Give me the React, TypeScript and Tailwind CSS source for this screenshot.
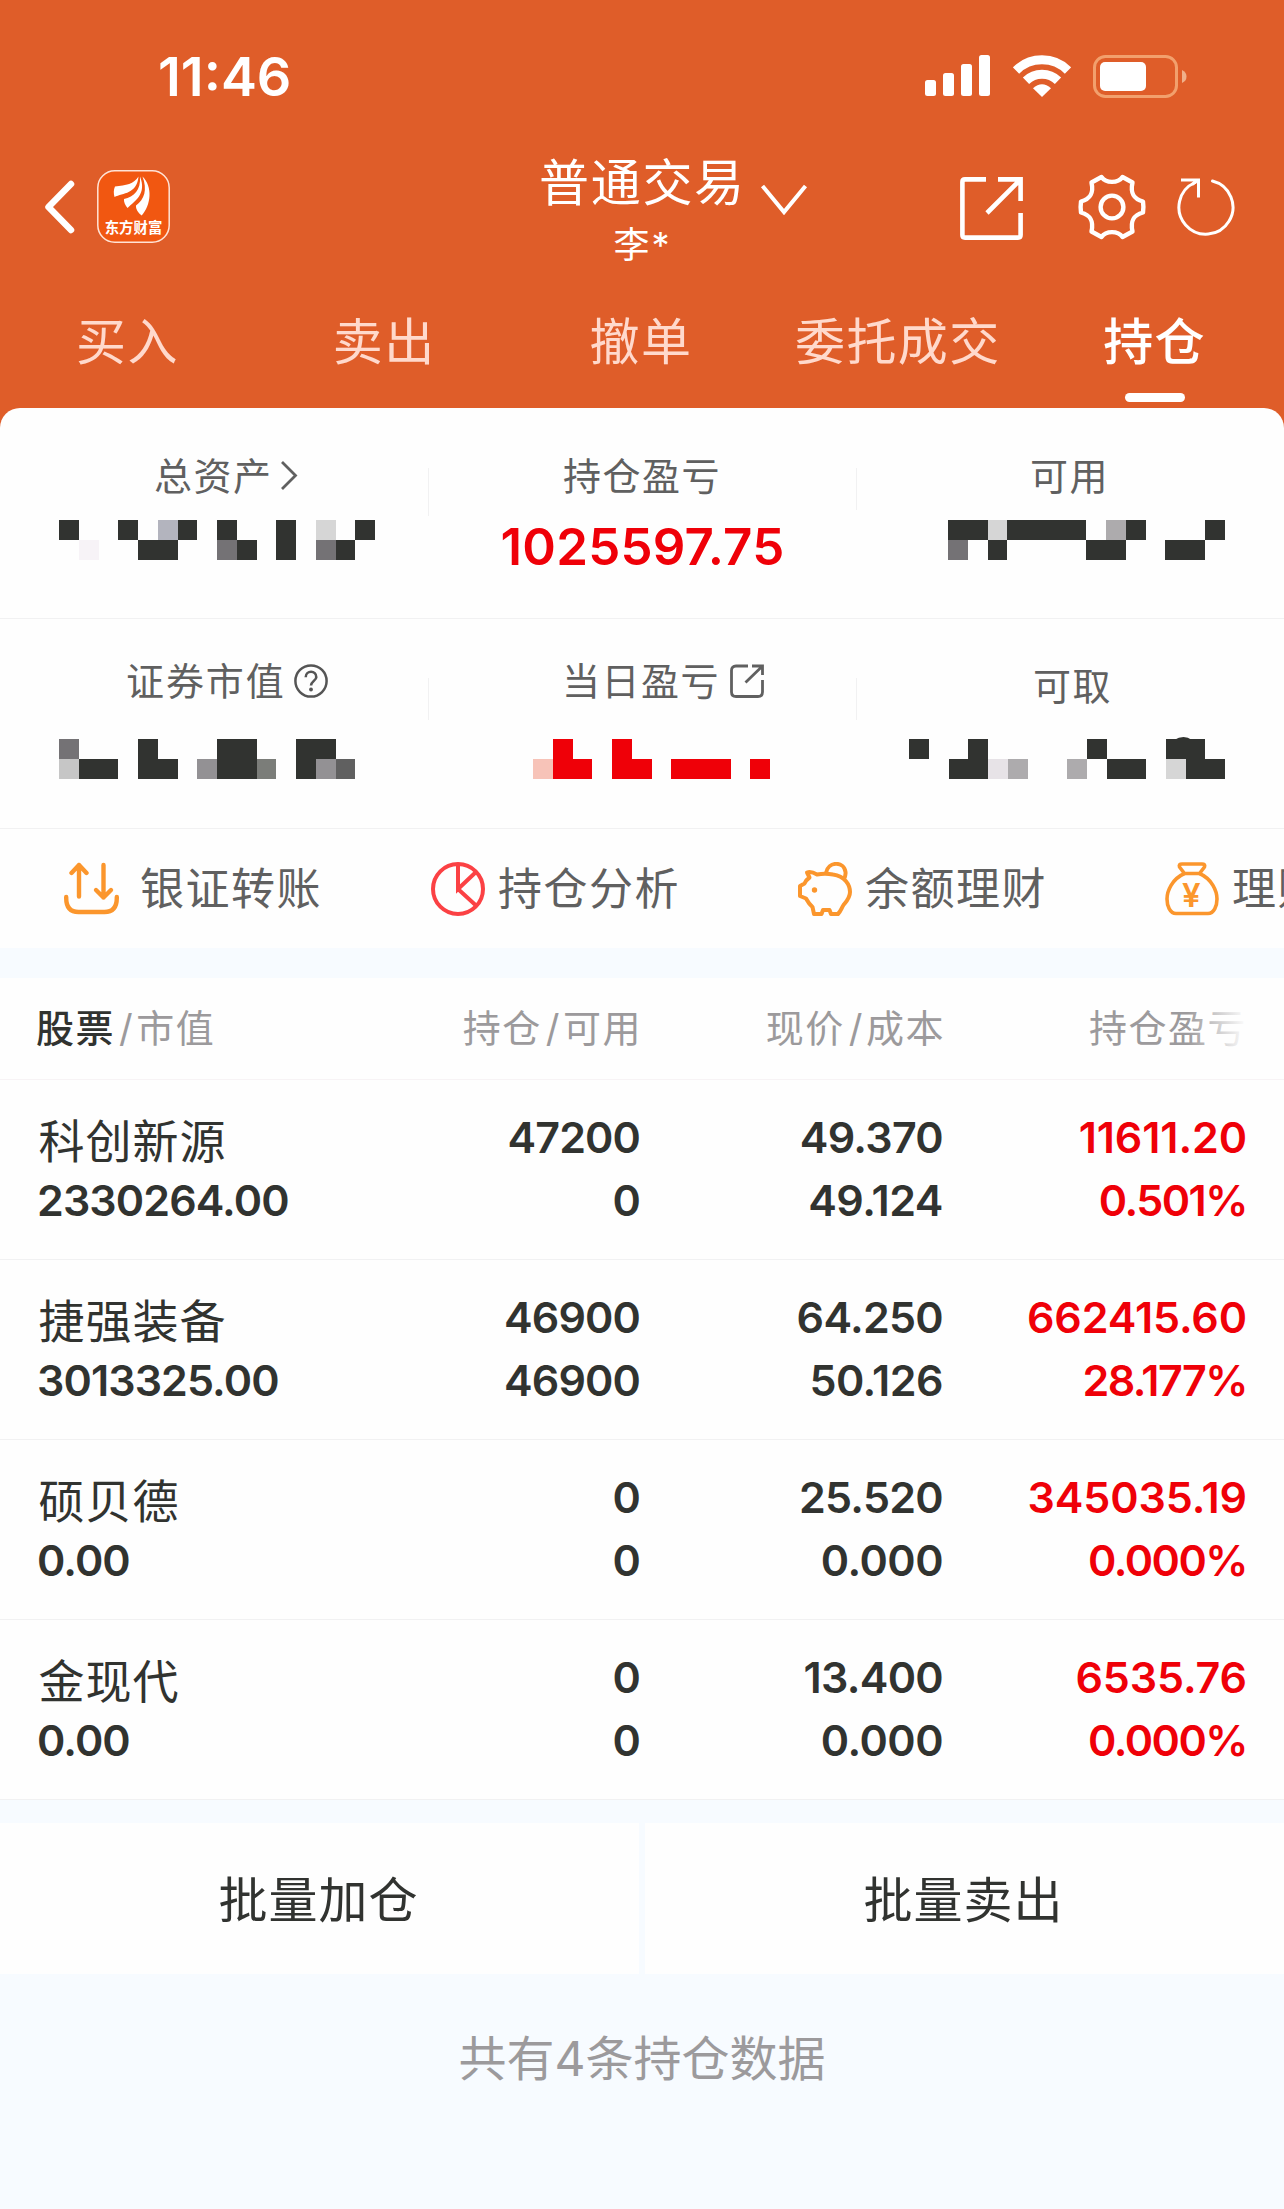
import type { ReactNode } from "react";

interface Position {
  name: string;
  marketValue: string;
  held: string;
  available: string;
  price: string;
  cost: string;
  profit: string;
  profitRate: string;
}

const positions: Position[] = [
  { name: "科创新源", marketValue: "2330264.00", held: "47200", available: "0", price: "49.370", cost: "49.124", profit: "11611.20", profitRate: "0.501%" },
  { name: "捷强装备", marketValue: "3013325.00", held: "46900", available: "46900", price: "64.250", cost: "50.126", profit: "662415.60", profitRate: "28.177%" },
  { name: "硕贝德", marketValue: "0.00", held: "0", available: "0", price: "25.520", cost: "0.000", profit: "345035.19", profitRate: "0.000%" },
  { name: "金现代", marketValue: "0.00", held: "0", available: "0", price: "13.400", cost: "0.000", profit: "6535.76", profitRate: "0.000%" },
];

const tabs = ["买入", "卖出", "撤单", "委托成交", "持仓"];

// One letter per mosaic block
const blockColors: Record<string, string> = {
  D: "bg-[#313330]",
  G: "bg-[#747275]",
  g: "bg-[#939194]",
  o: "bg-[#7b7d79]",
  k: "bg-[#606060]",
  m: "bg-[#adabad]",
  c: "bg-[#c6c6c6]",
  l: "bg-[#d6d6d6]",
  b: "bg-[#b3b4be]",
  w: "bg-[#e7e3e7]",
  p: "bg-[#f7f3f7]",
  R: "bg-[#ef0008]",
  r: "bg-[#f7c3b8]",
};

function Mosaic({ rows }: { rows: string[] }) {
  return (
    <div>
      {rows.map((row, i) => (
        <div key={i} className="flex h-5">
          {row.split("").map((cell, j) => (
            <div key={j} className={`h-5 w-[19.77px] shrink-0 ${blockColors[cell] ?? ""}`} />
          ))}
        </div>
      ))}
    </div>
  );
}

function StatusIcons() {
  return (
    <div className="mb-[1px] flex items-center">
      <svg width="65" height="42" viewBox="0 0 65 42" fill="#fff">
        <rect x="0" y="25" width="11" height="16" rx="2.5" />
        <rect x="18" y="18" width="11" height="23" rx="2.5" />
        <rect x="36" y="9" width="11" height="32" rx="2.5" />
        <rect x="54" y="0" width="11" height="41" rx="2.5" />
      </svg>
      <svg className="ml-[23px]" width="58" height="42" viewBox="0 0 58 42" fill="none" stroke="#fff">
        <path d="M3 15.5 A37 37 0 0 1 55 15.5" strokeWidth="9" />
        <path d="M13 25.8 A23 23 0 0 1 45 25.8" strokeWidth="9" />
        <path d="M20 33.2 Q29 25.5 38 33.2 L29 42 Z" fill="#fff" stroke="none" />
      </svg>
      <svg className="ml-[22px]" width="94" height="43" viewBox="0 0 94 43">
        <rect x="1.5" y="1.5" width="82" height="40" rx="11" fill="none" stroke="#f2a06d" strokeWidth="3" />
        <rect x="7" y="7" width="46" height="29" rx="5" fill="#fff" />
        <path d="M89 15 Q93.500 17 93.500 21.500 Q93.500 26 89 28 Z" fill="#f0b08a" />
      </svg>
    </div>
  );
}

function AppLogo() {
  return (
    <svg className="mb-[2px] ml-[22px]" width="73" height="73" viewBox="0 0 73 73">
      <rect x="0.800" y="0.800" width="71.400" height="71.400" rx="17" fill="#f15711" stroke="#ffe3d6" strokeWidth="1.500" />
      <g fill="#fff">
        <path d="M41.500 6.500 C37 14 29 15.500 18 16.500 C16.500 19.500 16.500 23.500 17.500 27 C26 23 40 24 41.500 6.500 Z" />
        <path d="M43 6.500 C44 20 37 27 27 29 C26.500 32 28.500 35.500 30.500 38 C38 31 50 24 43 6.500 Z" />
        <path d="M45.500 6.500 C50.500 20 47.500 29 39 35.500 C38.500 39 41.500 43 44.700 45.500 C54 35 56 17 45.500 6.500 Z" />
      </g>
      <text x="36.500" y="62.500" textAnchor="middle" fill="#fff" className="font-['Noto_Sans_CJK_SC',sans-serif] text-[14.4px] font-bold">
        东方财富
      </text>
    </svg>
  );
}

function HeaderIcons() {
  return (
    <div className="flex items-center">
      <svg className="mt-[2px]" width="63" height="63" viewBox="0 0 63 63" fill="none" stroke="#fff" strokeWidth="4.600">
        <path d="M26 2.400 H5 Q2.400 2.400 2.400 5 V58 Q2.400 60.600 5 60.600 H58 Q60.600 60.600 60.600 58 V36" />
        <path d="M38 2.400 H60.600 V24 M27 36 L60 3" />
      </svg>
      <svg className="ml-[53.5px]" width="70" height="68" viewBox="-35 -34 70 68" fill="none" stroke="#fff" strokeWidth="4.400" strokeLinejoin="round">
        <path d="M-10.500 -30 C-6 -23.500 6 -23.500 10.500 -30 L20.500 -24.500 C18 -13 22 -8 31 -5.500 Q31.800 0 31 5.500 C22 8 18 13 20.500 24.500 L10.500 30 C6 23.500 -6 23.500 -10.500 30 L-20.500 24.500 C-18 13 -22 8 -31 5.500 Q-31.800 0 -31 -5.500 C-22 -8 -18 -13 -20.500 -24.500 Z" />
        <circle r="11.400" />
      </svg>
      <svg className="ml-[29.5px]" width="60" height="60" viewBox="-30 -30 60 60" fill="none" stroke="#fff" strokeWidth="3">
        <path d="M6.500 -26 A27 27 0 1 1 -11 -24.500" strokeLinecap="round" />
        <path d="M-25 -27 H-7.500 V-9.500 M-8 -27 L-14 -22.500" />
      </svg>
    </div>
  );
}

function TransferIcon() {
  return (
    <svg width="55" height="54" viewBox="0.500 0 55 54" fill="none" stroke="#fb962d" strokeWidth="4.400" strokeLinecap="round" strokeLinejoin="round">
      <path d="M15.500 34.500 V3 M8 11 L15.500 3 L23 11" />
      <path d="M40 3 V35.500 M32.500 28 L40 35.500 L47.500 28" />
      <path d="M2.700 35 V36 Q2.700 50 15 50 H41 Q53.300 50 53.300 36 V35" />
    </svg>
  );
}

function PieIcon() {
  return (
    <svg width="54" height="54" viewBox="0 0 54 54" fill="none" stroke="#fb4144" strokeWidth="4">
      <circle cx="27" cy="27" r="25" />
      <path d="M27 2 V27 L45 10 M27 27 L45 43.500" />
    </svg>
  );
}

function PigIcon() {
  return (
    <svg width="54" height="54" viewBox="0 0 54 54" fill="none" stroke="#fb962d" strokeWidth="4" strokeLinejoin="round">
      <path d="M9 10.500 Q13 9 19 12.500 Q27 11 35 12.500 C47 14 52 23 52 30 C52 36 48 40 45.500 43 C43.500 46 43 49 40 52 H33 L31.500 48 H25 L23.500 52 H16 L14.500 45 Q11 42 8 36.500 L2 34 V24 L6.500 21.500 Q8 18 11.500 15.500 Z" />
      <path d="M28 11 C30 -1 46 -1 47.500 10 Q48 14 45.500 18" />
      <circle cx="16.500" cy="28" r="2.700" fill="#fb962d" stroke="none" />
    </svg>
  );
}

function BagIcon() {
  return (
    <svg className="shrink-0" width="54" height="54" viewBox="0 0 54 54" fill="none" stroke="#fb962d" strokeWidth="3.600" strokeLinejoin="round">
      <path d="M19.500 11.500 L14.500 5 Q13.500 2 17 2 H37 Q40.500 2 39.500 5 L34.500 11.500 Z" />
      <path d="M19.500 11.500 C7 17 2 29 2 37 C2 44 5 51.500 11 51.500 H43 C49 51.500 52 44 52 37 C52 29 47 17 34.500 11.500" />
      <text x="27" y="44.500" textAnchor="middle" fill="#fb962d" stroke="none" className="font-[Inter,sans-serif] text-[33px] font-semibold">
        ¥
      </text>
    </svg>
  );
}

interface SummaryCellProps {
  label: string;
  icon?: ReactNode;
  className?: string;
  labelClassName?: string;
  children: ReactNode;
}

function SummaryCell({ label, icon, className = "", labelClassName = "", children }: SummaryCellProps) {
  return (
    <div className={className}>
      <div className={`flex items-center leading-[60px] ${labelClassName}`}>
        <span>{label}</span>
        {icon}
      </div>
      {children}
    </div>
  );
}

function ColumnTitle({ left, right, strong }: { left: string; right: string; strong?: boolean }) {
  return (
    <div className={strong ? "" : "-mr-[2px] text-right"}>
      <span className={strong ? "-ml-[1px] font-medium text-[#313330]" : ""}>{left}</span>
      <span className="mr-[2px] ml-[4px]">/</span>
      <span>{right}</span>
    </div>
  );
}

const actions = [
  { label: "银证转账", icon: <TransferIcon />, gap: "gap-[21px]" },
  { label: "持仓分析", icon: <PieIcon />, gap: "gap-[13px]" },
  { label: "余额理财", icon: <PigIcon />, gap: "gap-[13px]" },
  { label: "理财", icon: <BagIcon />, gap: "gap-[13px]" },
];

export default function App() {
  return (
    <div className="h-[2209px] w-[1284px] overflow-hidden bg-[#f7fbff] font-[Inter,'Noto_Sans_CJK_SC',sans-serif] text-[#313330]">
      <div className="bg-[#df5d29]">
        {/* Status bar */}
        <div className="flex h-[134px] items-center justify-between pt-[19px] pr-[97px] pl-[158px]">
          <div className="text-[54px] font-semibold tracking-[0px] text-white">11:46</div>
          <StatusIcons />
        </div>

        {/* Navigation */}
        <div className="grid h-[146px] grid-cols-[539px_421px_324px] text-white">
          <div className="flex items-center pl-[43.5px]">
            <svg width="31" height="54" viewBox="0 0 31 54" fill="none" stroke="#fff" strokeWidth="6.500" strokeLinecap="round" strokeLinejoin="round">
              <path d="M27 4 L4.500 27 L27 50" />
            </svg>
            <AppLogo />
          </div>
          <div className="flex">
            <div className="w-[202px] pt-[18px] text-center">
              <div className="text-[50px] leading-[62px] tracking-[1.700px] whitespace-nowrap">普通交易</div>
              <div className="mt-[11px] pl-[5px] text-[36px] leading-10 tracking-[2px]">李*</div>
            </div>
            <svg className="mt-[50px] ml-[19px]" width="48" height="32" viewBox="0 0 48 32" fill="none" stroke="#fff" strokeWidth="4">
              <path d="M2.500 2 L24 28 L45.500 2" />
            </svg>
          </div>
          <HeaderIcons />
        </div>

        {/* Tabs */}
        <div className="grid h-32 grid-cols-5 pt-[27px]">
          {tabs.map((tab) => {
            const active = tab === "持仓";
            return (
              <div key={tab} className="flex flex-col items-center pr-[2px]">
                <div className={`text-[50px] leading-[70px] tracking-[1.400px] whitespace-nowrap ${active ? "font-medium text-white" : "text-[#ffd9cc]"}`}>
                  {tab}
                </div>
                {active && <div className="mt-[16px] h-[9px] w-[60px] rounded-full bg-white" />}
              </div>
            );
          })}
        </div>

        {/* Account summary */}
        <div className="rounded-t-[20px] bg-[#fefefe] text-[38px] tracking-[1.500px] text-[#606060]">
          <div className="flex h-[211px] border-b border-[#f1f1f2] pt-[38px]">
            <SummaryCell
              label="总资产"
              className="w-[428px] pl-[59px]"
              labelClassName="pl-[95px]"
              icon={
                <svg className="ml-[7px]" width="18" height="32" viewBox="0 0 18 32" fill="none" stroke="#606060" strokeWidth="2.800">
                  <path d="M2 2 L15.500 15.500 L2 29" />
                </svg>
              }
            >
              <div className="mt-[14px]">
                <Mosaic rows={["D  D bD D  D l D", " p  DD  GD D GD"]} />
              </div>
            </SummaryCell>
            <div className="mt-[22px] h-12 w-px bg-[#f1f1f2]" />
            <SummaryCell label="持仓盈亏" className="w-[427px]" labelClassName="justify-center pr-[1px]">
              <div className="mt-[11px] text-center text-[51px] leading-[60px] font-semibold tracking-[0.200px] text-[#ef0008]">
                1025597.75
              </div>
            </SummaryCell>
            <div className="mt-[22px] h-[42px] w-px bg-[#f1f1f2]" />
            <SummaryCell label="可用" className="w-[427px] pl-[91px]" labelClassName="pl-[82px]">
              <div className="mt-[14px]">
                <Mosaic rows={["DDlDDDD mD   D", "G D    DD  DD"]} />
              </div>
            </SummaryCell>
          </div>

          <div className="flex h-[210px] border-b border-[#f1f1f2] pt-[32px]">
            <SummaryCell
              label="证券市值"
              className="w-[428px] pl-[59px]"
              labelClassName="pl-[67px] tracking-[1.900px]"
              icon={
                <svg className="ml-[8px]" width="34" height="34" viewBox="0 0 34 34">
                  <circle cx="17" cy="17" r="15.600" fill="none" stroke="#555" strokeWidth="2.500" />
                  <path d="M11.700 13.200 C11.700 6 22.500 6 22.300 13.200 C22.200 16.500 17 17.500 17 21.500" fill="none" stroke="#555" strokeWidth="2.600" />
                  <circle cx="17" cy="25.500" r="1.900" fill="#555" />
                </svg>
              }
            >
              <div className="mt-[28px]">
                <Mosaic rows={["G   D   DD  DD", "cDD DD gDDo Dgk"]} />
              </div>
            </SummaryCell>
            <div className="mt-[27px] h-[42px] w-px bg-[#f1f1f2]" />
            <SummaryCell
              label="当日盈亏"
              className="w-[427px] pl-[104px]"
              labelClassName="pl-[29px]"
              icon={
                <svg className="ml-[10px]" width="34" height="34" viewBox="0 0 34 34" fill="none" stroke="#606060" strokeWidth="2.800">
                  <path d="M18 2 H6 Q1.500 2 1.500 6.500 V28 Q1.500 32.500 6 32.500 H28 Q32.500 32.500 32.500 28 V16" />
                  <path d="M22 2 H32.500 V11 M15.500 18.500 L32 2.500" />
                </svg>
              }
            >
              <div className="mt-[28px]">
                <Mosaic rows={[" R  R", "rRR RR RRR R"]} />
              </div>
            </SummaryCell>
            <div className="mt-[27px] h-[42px] w-px bg-[#f1f1f2]" />
            <SummaryCell label="可取" className="w-[427px] pt-[5px] pl-[52px]" labelClassName="pl-[124px]">
              <div className="relative mt-[23px]">
                <svg className="absolute -top-[2px] left-[265px]" width="18" height="3" viewBox="0 0 18 3" fill="#313330">
                  <path d="M0 3 Q10 -3 18 3 Z" />
                </svg>
                <Mosaic rows={["D  D     D   DD", "  DDwm  m DD lDD"]} />
              </div>
            </SummaryCell>
          </div>

          {/* Quick actions, the last one runs off the screen */}
          <div className="flex h-[119px] overflow-hidden pl-[64px] text-[44px] tracking-[1.500px]">
            {actions.map((action, i) => (
              <div key={i} className={`flex w-[367px] shrink-0 items-center ${action.gap}`}>
                {action.icon}
                <span className="whitespace-nowrap">{action.label}</span>
              </div>
            ))}
          </div>
        </div>
      </div>

      {/* Positions */}
      <div className="mt-[30px] bg-[#fefefe]">
        <div className="relative grid h-[102px] grid-cols-[343px_260px_303px_304px] items-center border-b border-[#f7f3f5] px-[37px] text-[38px] tracking-[1.500px] text-[#9c9a9c]">
          <ColumnTitle left="股票" right="市值" strong />
          <ColumnTitle left="持仓" right="可用" />
          <ColumnTitle left="现价" right="成本" />
          <div className="text-right">持仓盈亏</div>
          <div className="absolute top-0 right-[37px] h-[100px] w-[60px] bg-linear-to-r from-transparent to-[#fefefe]" />
        </div>
        {positions.map((p) => (
          <div
            key={p.name}
            className="grid h-[180px] grid-cols-[343px_260px_303px_304px] border-b border-[#f1f1f2] px-[37px] pt-[26px] text-[43px] leading-[63px] font-[560] tracking-[-0.900px]"
          >
            <div>
              <div className="relative top-[4px] left-[1.5px] text-[46px] font-normal tracking-[1px]">{p.name}</div>
              <div>{p.marketValue}</div>
            </div>
            <div className="text-right">
              <div>{p.held}</div>
              <div>{p.available}</div>
            </div>
            <div className="text-right">
              <div className="tracking-[-0.700px]">{p.price}</div>
              <div className="tracking-[-0.500px]">{p.cost}</div>
            </div>
            <div className="text-right text-[#ef0008]">
              <div className="tracking-[-0.100px]">{p.profit}</div>
              <div className="tracking-[-1.500px]">{p.profitRate}</div>
            </div>
          </div>
        ))}
      </div>

      {/* Batch buttons */}
      <div className="mt-[23px] grid h-[151px] grid-cols-2 gap-[6px] text-[49px] tracking-[1px]">
        <button className="bg-[#fefefe] pt-[5px] pr-[2px]">批量加仓</button>
        <button className="bg-[#fefefe] pt-[5px] pr-[2px]">批量卖出</button>
      </div>
      <div className="mt-[55px] text-center text-[48px] leading-[60px] text-[#9c9a9c]">共有4条持仓数据</div>
    </div>
  );
}
